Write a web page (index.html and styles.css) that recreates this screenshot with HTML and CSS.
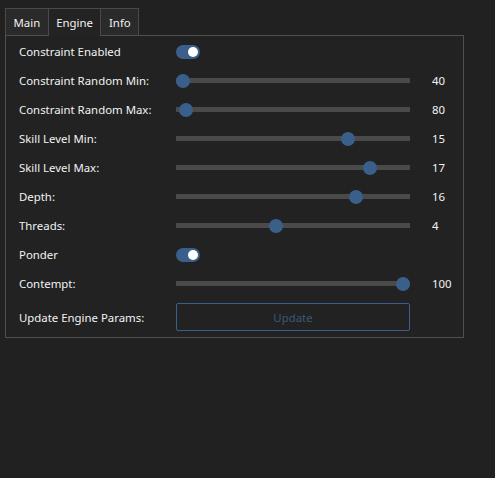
FILE: index.html
```html
<!DOCTYPE html>
<html>
<head>
<meta charset="utf-8">
<link rel="stylesheet" href="styles.css">
</head>
<body>
<div class="tabs">
  <div class="tab">Main</div>
  <div class="tab active">Engine</div>
  <div class="tab">Info</div>
</div>
<div class="panel">
  <div class="row"><span class="label">Constraint Enabled</span><span class="toggle"><span class="knob"></span></span><span></span></div>
  <div class="row"><span class="label">Constraint Random Min:</span><span class="slider"><span class="track"></span><span class="handle" style="left:0%"></span></span><span class="value">40</span></div>
  <div class="row"><span class="label">Constraint Random Max:</span><span class="slider"><span class="track"></span><span class="handle" style="left:1.5%"></span></span><span class="value">80</span></div>
  <div class="row"><span class="label">Skill Level Min:</span><span class="slider"><span class="track"></span><span class="handle" style="left:75%"></span></span><span class="value">15</span></div>
  <div class="row"><span class="label">Skill Level Max:</span><span class="slider"><span class="track"></span><span class="handle" style="left:85%"></span></span><span class="value">17</span></div>
  <div class="row"><span class="label">Depth:</span><span class="slider"><span class="track"></span><span class="handle" style="left:78.8%"></span></span><span class="value">16</span></div>
  <div class="row"><span class="label">Threads:</span><span class="slider"><span class="track"></span><span class="handle" style="left:42.4%"></span></span><span class="value">4</span></div>
  <div class="row"><span class="label">Ponder</span><span class="toggle"><span class="knob"></span></span><span></span></div>
  <div class="row"><span class="label">Contempt:</span><span class="slider"><span class="track"></span><span class="handle" style="left:100%"></span></span><span class="value">100</span></div>
  <div class="row btnrow"><span class="label">Update Engine Params:</span><button class="btn">Update</button><span></span></div>
</div>
</body>
</html>
```
FILE: styles.css
```css
html, body {
  margin: 0;
  padding: 0;
  background: #212121;
  color: #f2f2f2;
  font-family: "Noto Sans", "Open Sans", sans-serif;
  font-size: 11.4px;
}
body {
  padding: 8px 0 0 5px;
}
.tabs {
  display: flex;
  height: 27px;
}
.tab {
  box-sizing: border-box;
  height: 27px;
  padding: 0 7.5px;
  display: flex;
  align-items: center;
  border: 1px solid #4a4a4a;
  border-bottom: none;
  background: #2a2a2a;
  margin-left: -1px;
}
.tab:first-child { margin-left: 0; }
.tab.active {
  background: #232323;
  height: 28px;
  position: relative;
  z-index: 1;
}
.panel {
  box-sizing: border-box;
  width: 459px;
  border: 1px solid #4f4f4f;
  padding: 1px 0 1px 13px;
  background: #222222;
}
.row {
  display: grid;
  grid-template-columns: 157px 234px 1fr;
  align-items: center;
  height: 29px;
}
.btnrow { height: 38px; }
.label { white-space: nowrap; }
.value { padding-left: 22px; }
.toggle {
  position: relative;
  width: 24px;
  height: 14px;
  border-radius: 7px;
  background: #3a5f8a;
}
.knob {
  position: absolute;
  right: 2px;
  top: 2px;
  width: 10px;
  height: 10px;
  border-radius: 50%;
  background: #ffffff;
}
.slider {
  position: relative;
  height: 14px;
  margin-right: 7px;
  margin-left: 7px;
}
.track {
  position: absolute;
  left: -7px;
  right: -7px;
  top: 4.5px;
  height: 5px;
  background: #4a4a4a;
}
.handle {
  position: absolute;
  top: 0;
  width: 14px;
  height: 14px;
  margin-left: -7px;
  border-radius: 50%;
  background: #3a5f8a;
}
.btn {
  box-sizing: border-box;
  width: 234px;
  height: 28px;
  background: transparent;
  border: 1px solid #3a5f8a;
  border-radius: 2px;
  color: #3b5878;
  font-family: inherit;
  font-size: 11.4px;
}
```
